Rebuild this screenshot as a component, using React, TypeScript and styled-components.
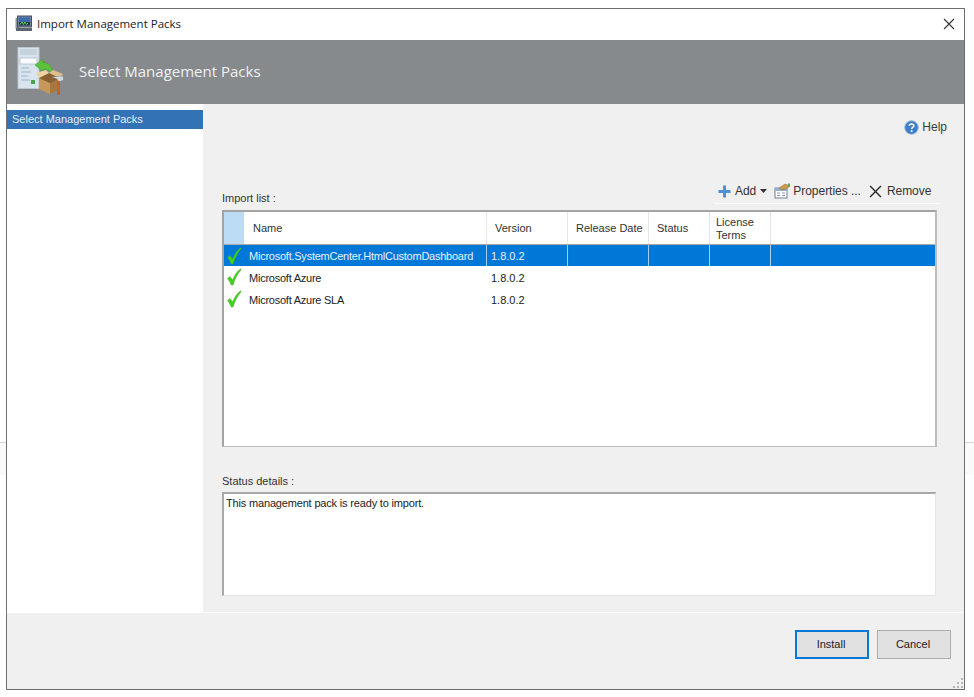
import React from "react";
import styled, { createGlobalStyle } from "styled-components";

const Global = createGlobalStyle`
  html, body { margin: 0; padding: 0; background: #fff; }
  body { font-family: "Liberation Sans", Arial, sans-serif; font-size: 11px; color: #1c1c1c; }
  #root { width: 974px; height: 697px; overflow: hidden; }
`;

const Page = styled.div`
  position: relative;
  width: 974px;
  height: 697px;
  padding: 8px 9px 7px 6px;
  box-sizing: border-box;
  overflow: hidden;
`;
const Backdrop = styled.div`
  position: absolute;
  left: 0;
  right: 0;
  top: 442px;
  height: 32px;
  background: #fafafa;
  border-top: 1px solid #d4d4d4;
`;
const Window = styled.div`
  position: relative;
  height: 100%;
  box-sizing: border-box;
  border: 1px solid #6f6f6f;
  background: #f0f0f0;
  display: flex;
  flex-direction: column;
`;
const TitleBar = styled.div`
  height: 31px;
  background: #fff;
  display: flex;
  align-items: center;
  padding: 0 9px 2px 8px;
  gap: 4px;
  flex: none;
  box-sizing: border-box;
`;
const TitleText = styled.span`
  flex: 1;
  font-family: "Open Sans", sans-serif;
  font-size: 11.5px;
  color: #222;
`;
const Banner = styled.div`
  height: 64px;
  flex: none;
  background: #868a8d;
  display: flex;
  align-items: center;
  padding: 0 0 3px 10px;
  gap: 15px;
  box-sizing: border-box;
`;
const BannerIconSlot = styled.div`
  display: flex;
  margin-top: 2px;
`;
const BannerTitle = styled.span`
  font-family: "Open Sans", sans-serif;
  font-size: 15px;
  color: #f0f0f0;
`;
const Middle = styled.div`
  flex: 1;
  display: flex;
  min-height: 0;
`;
const Sidebar = styled.div`
  width: 196px;
  flex: none;
  background: #fff;
  padding-top: 6px;
`;
const NavItem = styled.div`
  height: 19px;
  line-height: 18px;
  background: #3373b5;
  color: #e6eef6;
  padding-left: 5px;
`;
const Content = styled.div`
  flex: 1;
  padding: 15px 27px 16px 19px;
  display: flex;
  flex-direction: column;
  border-bottom: 1px solid #fafafa;
`;
const HelpRow = styled.div`
  display: flex;
  justify-content: flex-end;
  align-items: center;
  gap: 3px;
  margin-right: -11px;
  padding-right: 1px;
  height: 16px;
  font-size: 12px;
  color: #3a3a3a;
`;
const ListHead = styled.div`
  margin-top: 38px;
  height: 33px;
  display: flex;
  justify-content: space-between;
  align-items: flex-end;
`;
const Label = styled.span`
  color: #333;
  line-height: 14px;
`;
const ListLabel = styled(Label)`
  padding-bottom: 1px;
`;
const Toolbar = styled.div`
  width: 226px;
  height: 22px;
  margin: 0 -3px 2px 0;
  display: flex;
  align-items: center;
  box-sizing: border-box;
  border-bottom: 1px solid #fbfbfb;
  padding: 0 5px 3px 4px;
  font-size: 12px;
  letter-spacing: -0.03px;
  color: #333;
`;
const ToolItem = styled.span<{ $gap?: number; $after?: number }>`
  display: inline-flex;
  align-items: center;
  gap: ${(p) => p.$gap ?? 4}px;
  margin-right: ${(p) => p.$after ?? 0}px;
`;
const Table = styled.div`
  margin-top: 4px;
  height: 237px;
  box-sizing: border-box;
  border: 2px solid #a3a3a3;
  border-right-color: #bdbdbd;
  border-bottom-color: #bdbdbd;
  border-bottom-width: 1px;
  background: #fff;
  overflow: hidden;
`;
const columns = "21px 242px 81px 81px 61px 61px 1fr";
const HeadRow = styled.div`
  display: grid;
  grid-template-columns: ${columns};
  height: 33px;
  box-sizing: border-box;
  border-bottom: 1px solid #a9a9a9;
  color: #333;
`;
const HeadCell = styled.div<{ $tight?: boolean }>`
  display: flex;
  align-items: center;
  padding-left: ${(p) => (p.$tight ? 6 : 8)}px;
  padding-top: 1px;
  border-right: 1px solid #e6e6e6;
  line-height: 13px;
  &:last-child { border-right: 0; }
`;
const Corner = styled.div`
  background: #bcdcf5;
  margin-right: 1px;
`;
const Row = styled.div<{ $selected?: boolean }>`
  display: grid;
  grid-template-columns: ${columns};
  height: ${(p) => (p.$selected ? 21 : 22)}px;
  background: ${(p) => (p.$selected ? "#0078d7" : "#fff")};
  color: ${(p) => (p.$selected ? "#e8f2fb" : "#222")};
`;
const Cell = styled.div<{ $selected?: boolean }>`
  display: flex;
  align-items: center;
  padding-left: 4px;
  padding-top: 1px;
  white-space: nowrap;
  border-right: 1px solid ${(p) => (p.$selected ? "#a9cdee" : "transparent")};
  &:last-child { border-right: 0; }
`;
const NameCell = styled(Cell)`
  letter-spacing: -0.24px;
`;
const CheckCell = styled.div`
  display: flex;
  align-items: center;
  justify-content: center;
  padding-right: 2px;
`;
const StatusLabel = styled(Label)`
  margin-top: 27px;
  height: 18px;
`;
const StatusBox = styled.div`
  height: 104px;
  margin-right: 1px;
  box-sizing: border-box;
  border: 2px solid #a8a8a8;
  border-right: 1px solid #e4e4e4;
  border-bottom: 1px solid #e4e4e4;
  background: #fff;
  padding: 3px 2px;
  letter-spacing: -0.17px;
  color: #222;
`;
const Footer = styled.div`
  height: 76px;
  flex: none;
  display: flex;
  justify-content: flex-end;
  align-items: flex-start;
  gap: 8px;
  padding: 17px 13px 0 0;
  box-sizing: border-box;
  position: relative;
`;
const Button = styled.button<{ $primary?: boolean }>`
  width: 74px;
  height: 29px;
  box-sizing: border-box;
  background: #e1e1e1;
  border: ${(p) => (p.$primary ? "2px solid #0a78d7" : "1px solid #adadad")};
  font: inherit;
  color: #222;
  padding: 0 2px 2px 0;
`;
const Grip = styled.svg`
  position: absolute;
  right: 1px;
  bottom: 1px;
`;

const Check = () => (
  <svg width="16" height="18" viewBox="0 0 16 18">
    <path d="M1.5 10.5 L4 8.5 L6.5 12 C8.5 7.5 10.5 4 14.5 0.8 L15.2 1.6 C11.5 6 9 11 7 17 L5.2 17 C4.2 14.5 3 12.5 1.5 10.5 Z" fill="#44cf22" stroke="#2fae12" strokeWidth="0.4" />
  </svg>
);

const AppIcon = () => (
  <svg width="18" height="17" viewBox="0 0 18 17">
    <rect x="0.5" y="3" width="4" height="11" fill="#8a94a0" />
    <rect x="2.5" y="1" width="14" height="11" fill="#6d83a6" stroke="#49505c" strokeWidth="1" />
    <rect x="4" y="2.5" width="11" height="8" fill="#3d6aa8" />
    <rect x="4" y="7" width="11" height="3.5" fill="#2c3a3a" />
    <path d="M5 9.5 L7 7 L8.5 9.5 L10 7 L11.5 9.5 L13 8" fill="none" stroke="#55d060" strokeWidth="1" />
    <rect x="1" y="13" width="16" height="3" fill="#5d6670" />
  </svg>
);

const BannerIcon = () => (
  <svg width="47" height="49" viewBox="0 0 47 49">
    <rect x="1" y="0.5" width="21" height="41" fill="#d9e4ee" stroke="#bcc6ce" />
    <rect x="3" y="2" width="17" height="6" fill="#c4d2de" />
    <rect x="3" y="11" width="17" height="6" fill="#f7f9fb" stroke="#9fb0bf" strokeWidth="0.6" />
    <path d="M4 21h8M4 25h10M4 29h7M4 33h9" stroke="#90a8be" strokeWidth="0.8" />
    <rect x="14" y="33" width="4" height="4" fill="#4f9f4f" />
    <path d="M18 18 L26 12 L26 15.5 C32 15.5 36 20 36 28 C33.5 24 30 22 26 22.5 L26 25 Z" fill="#5cc23e" stroke="#3e9428" strokeWidth="0.5" />
    <path d="M22 31 L33 36 L33 47 L22 42 Z" fill="#c8975a" />
    <path d="M33 36 L43 31 L43 42 L33 47 Z" fill="#a97840" />
    <path d="M22 31 L32 26 L43 31 L33 36 Z" fill="#8a6030" />
    <path d="M22 31 L19 26 L29 23 L32 26 Z" fill="#edd2a4" />
    <path d="M43 31 L46 27 L36 23 L32 26 Z" fill="#e0bd8c" />
    <path d="M35 30 L46 29 L46.5 33 L42 35 L40 32 Z" fill="#d3d8dc" stroke="#7b8287" strokeWidth="0.4" />
    <rect x="40" y="34" width="3" height="14" fill="#c0642a" />
  </svg>
);

const HelpIcon = () => (
  <svg width="15" height="15" viewBox="0 0 15 15">
    <circle cx="7.5" cy="7.5" r="6.8" fill="#3d7fc9" stroke="#9dbbdc" strokeWidth="1" />
    <path d="M5.2 5.8 C5.4 3.6 9.8 3.4 9.8 5.8 C9.8 7.4 7.6 7.4 7.6 9" fill="none" stroke="#fff" strokeWidth="1.5" />
    <circle cx="7.6" cy="11" r="1" fill="#fff" />
  </svg>
);

const PlusIcon = () => (
  <svg width="13" height="13" viewBox="0 0 13 13">
    <path d="M5 0.5h3v4.5h4.5v3H8v4.5H5V8H0.5V5H5z" fill="#4b93d6" />
  </svg>
);

const PropsIcon = () => (
  <svg width="17" height="16" viewBox="0 0 17 16">
    <rect x="1" y="5" width="12" height="10" fill="#fff" stroke="#6f7f90" />
    <rect x="1" y="5" width="12" height="3" fill="#8fb2d4" />
    <path d="M3 10h3M8 10h3M3 12.5h3M8 12.5h3" stroke="#8c97a3" />
    <path d="M5 5 L11 1 L16 3 L12 6 L8 7 Z" fill="#c89a52" stroke="#8a6a35" strokeWidth="0.5" />
    <rect x="14" y="0.5" width="2" height="3" fill="#4fae4b" />
  </svg>
);

const CrossIcon = ({ size, color, w }: { size: number; color: string; w: number }) => (
  <svg width={size} height={size} viewBox="0 0 12 12">
    <path d="M1 1 L11 11 M11 1 L1 11" stroke={color} strokeWidth={w} fill="none" />
  </svg>
);

const Caret = () => (
  <svg width="7" height="4" viewBox="0 0 7 4">
    <path d="M0 0h7L3.5 4z" fill="#333" />
  </svg>
);

const rows = ["Microsoft.SystemCenter.HtmlCustomDashboard", "Microsoft Azure", "Microsoft Azure SLA"];

export default function App() {
  return (
    <Page>
      <Global />
      <Backdrop />
      <Window>
        <TitleBar>
          <AppIcon />
          <TitleText>Import Management Packs</TitleText>
          <CrossIcon size={12} color="#333" w={1.1} />
        </TitleBar>
        <Banner>
          <BannerIconSlot>
            <BannerIcon />
          </BannerIconSlot>
          <BannerTitle>Select Management Packs</BannerTitle>
        </Banner>
        <Middle>
          <Sidebar>
            <NavItem>Select Management Packs</NavItem>
          </Sidebar>
          <Content>
            <HelpRow>
              <HelpIcon />
              <span>Help</span>
            </HelpRow>
            <ListHead>
              <ListLabel>Import list :</ListLabel>
              <Toolbar>
                <ToolItem $after={7}>
                  <PlusIcon />
                  Add
                  <Caret />
                </ToolItem>
                <ToolItem $gap={2} $after={8}>
                  <PropsIcon />
                  Properties ...
                </ToolItem>
                <ToolItem $gap={5}>
                  <CrossIcon size={13} color="#2a2a2a" w={1.3} />
                  Remove
                </ToolItem>
              </Toolbar>
            </ListHead>
            <Table>
              <HeadRow>
                <Corner />
                <HeadCell>Name</HeadCell>
                <HeadCell>Version</HeadCell>
                <HeadCell>Release Date</HeadCell>
                <HeadCell>Status</HeadCell>
                <HeadCell $tight>License<br />Terms</HeadCell>
                <HeadCell />
              </HeadRow>
              {rows.map((name, i) => (
                <Row key={name} $selected={i === 0}>
                  <CheckCell>
                    <Check />
                  </CheckCell>
                  <NameCell $selected={i === 0}>{name}</NameCell>
                  <Cell $selected={i === 0}>1.8.0.2</Cell>
                  <Cell $selected={i === 0} />
                  <Cell $selected={i === 0} />
                  <Cell $selected={i === 0} />
                  <Cell />
                </Row>
              ))}
            </Table>
            <StatusLabel>Status details :</StatusLabel>
            <StatusBox>This management pack is ready to import.</StatusBox>
          </Content>
        </Middle>
        <Footer>
          <Button $primary>Install</Button>
          <Button>Cancel</Button>
          <Grip width="10" height="10" viewBox="0 0 10 10">
            <path d="M8 0h2v2H8zM4 4h2v2H4zM8 4h2v2H8zM0 8h2v2H0zM4 8h2v2H4zM8 8h2v2H8z" fill="#b5b5b5" />
          </Grip>
        </Footer>
      </Window>
    </Page>
  );
}
